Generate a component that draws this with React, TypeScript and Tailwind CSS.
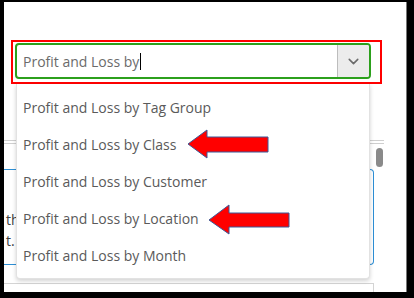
import { ChevronDown } from 'lucide-react';

const reports = [
  'Profit and Loss by Tag Group',
  'Profit and Loss by Class',
  'Profit and Loss by Customer',
  'Profit and Loss by Location',
  'Profit and Loss by Month',
];

function Arrows() {
  return (
    <svg
      className="absolute left-[-4px] top-[-2px] pointer-events-none"
      width="414"
      height="298"
      viewBox="0 0 414 298"
    >
      <polygon
        points="188,144 207,130 207,137 268,137 268,152 207,152 207,158"
        fill="#ff0000"
        stroke="#3b5998"
        strokeWidth="1"
      />
      <polygon
        points="209,220 229,205 229,213 289,213 289,227 229,227 229,234"
        fill="#ff0000"
        stroke="#3b5998"
        strokeWidth="1"
      />
    </svg>
  );
}

export default function App() {
  return (
    <div className="w-[414px] h-[298px] bg-black pt-[2px] pl-[4px] pr-[7px] pb-[6px] font-['Open_Sans',sans-serif]">
      <div className="relative h-full bg-white overflow-hidden border-r border-[#777]">
        {/* combobox, outlined in red */}
        <div className="mt-[38px] ml-[7px] w-[371px] h-[44px] border-2 border-[#ff0000] pl-[2px] pt-[1px]">
          <div className="flex w-[356px] h-[36px] border-2 border-[#2ca01c] rounded-[4px] overflow-hidden">
            <div className="flex-1 flex items-center pl-[6px] text-[14px] text-[#6b6b6b]">
              Profit and Loss by
              <span className="inline-block w-px h-[17px] bg-black ml-px" />
            </div>
            <div className="w-[32px] flex items-center justify-center bg-[#ececec] border-l border-[#bdbdbd]">
              <ChevronDown className="w-[17px] h-[17px] text-[#6b6b6b]" strokeWidth={2.2} />
            </div>
          </div>
        </div>

        {/* page content behind the menu */}
        <div className="mt-[56px] h-[4px] w-[380px] border-y border-[#cfcfcf]" />
        <div className="flex">
          <div className="w-[370px]">
            <div className="mt-[25px] h-[96px] border-[1.5px] border-l-0 border-[#2d8fd5] rounded-r-[4px] pl-[2px] pt-[39px] text-[14px] leading-[21px] text-[#404040]">
              <div>th</div>
              <div>t.</div>
            </div>
            <div className="mt-[18px] h-[20px] border-t border-r border-[#d4d4d4]" />
          </div>
          <div className="ml-[2px] mt-[4px] w-[7px] h-[19px] rounded-full bg-[#8a8a8a]" />
        </div>

        {/* dropdown menu */}
        <div className="absolute left-[12px] top-[82px] w-[354px] h-[195px] bg-white rounded-b-[4px] border border-t-0 border-[#e2e2e2] shadow-[0_2px_4px_rgba(0,0,0,0.18)] pt-[5px]">
          {reports.map((r) => (
            <div key={r} className="h-[37px] flex items-center pl-[6px] text-[14px] text-[#5a5a5a]">
              {r}
            </div>
          ))}
        </div>

        <Arrows />
      </div>
    </div>
  );
}
